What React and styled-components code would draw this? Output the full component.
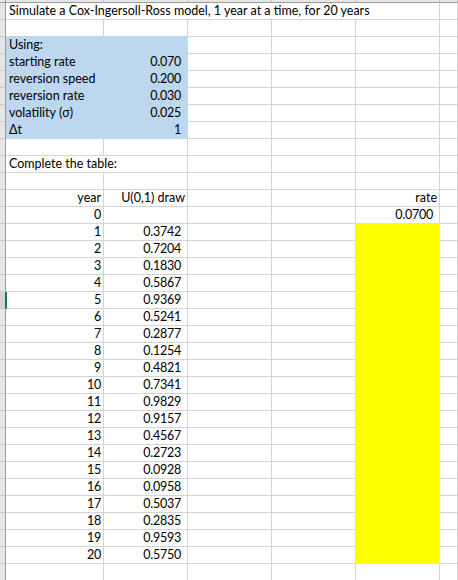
import React from "react";
import styled, { createGlobalStyle } from "styled-components";

const GlobalStyle = createGlobalStyle`
  html, body { margin: 0; padding: 0; background: #ffffff; }
  body { font-family: "Lato", "Liberation Sans", sans-serif; color: #000; overflow: hidden; }
`;

const COLS = "6px 98px 84px 84px 84px 84px 1fr";

const Sheet = styled.div`
  width: 458px;
  height: 580px;
  overflow: hidden;
  display: flex;
  flex-direction: column;
`;

const HeaderStrip = styled.div`
  display: grid;
  grid-template-columns: ${COLS};
  height: 3px;
  flex: none;
`;

const HeaderCell = styled.div`
  box-sizing: border-box;
  background: #e6e6e6;
  border-bottom: 1px solid #9b9b9b;
  border-right: 1px solid ${(p) => (p.$corner ? "#9b9b9b" : "#c6c6c6")};
`;

const Row = styled.div`
  display: grid;
  grid-template-columns: ${COLS};
  height: 17px;
  flex: none;
`;

const RowHead = styled.div`
  position: relative;
  box-sizing: border-box;
  background: ${(p) => (p.$selected ? "#d2d2d2" : "#e6e6e6")};
  border-bottom: 1px solid #c6c6c6;
  border-right: 1px solid ${(p) => (p.$selected ? "#217346" : "#9b9b9b")};
  ${(p) =>
    p.$selected &&
    `&::after {
      content: "";
      position: absolute;
      top: 0;
      bottom: -1px;
      right: -2px;
      width: 1px;
      background: #217346;
      z-index: 2;
    }`}
`;

const fills = { blue: "#bdd7ee", yellow: "#ffff00" };

const Cell = styled.div`
  box-sizing: border-box;
  grid-column: span ${(p) => p.$span || 1};
  display: flex;
  align-items: flex-end;
  justify-content: ${(p) => (p.$right ? "flex-end" : "flex-start")};
  padding: 0 ${(p) => (p.$right ? p.$pad ?? 2 : 0)}px 1px ${(p) => (p.$right ? 0 : 3)}px;
  background: ${(p) => (p.$fill ? fills[p.$fill] : "transparent")};
  border-right: 1px solid ${(p) => (p.$fill ? fills[p.$fill] : "#d4d4d4")};
  border-bottom: 1px solid ${(p) => (p.$fill ? fills[p.$fill] : "#d4d4d4")};
  box-shadow: ${(p) =>
    p.$fill
      ? `0 -1px 0 ${fills[p.$fill]}, -1px 0 0 ${fills[p.$fill]}, -1px -1px 0 ${fills[p.$fill]}`
      : "none"};
  font-size: 12.5px;
  line-height: 15px;
  letter-spacing: ${(p) => (p.$num ? "-0.25px" : "0")};
  white-space: nowrap;
  overflow: visible;
`;

const params = [
  ["Using:", ""],
  ["starting rate", "0.070"],
  ["reversion speed", "0.200"],
  ["reversion rate", "0.030"],
  ["volatility (σ)", "0.025"],
  ["Δt", "1"],
];

const draws = [
  "0.3742", "0.7204", "0.1830", "0.5867", "0.9369", "0.5241", "0.2877",
  "0.1254", "0.4821", "0.7341", "0.9829", "0.9157", "0.4567", "0.2723",
  "0.0928", "0.0958", "0.5037", "0.2835", "0.9593", "0.5750",
];

function Blank({ n = 5 }) {
  return Array.from({ length: n }).map((_, i) => <Cell key={i} />);
}

export default function App() {
  const rows = [];
  let idx = 0;
  const push = (content, selected = false) => {
    rows.push(
      <Row key={idx++}>
        <RowHead $selected={selected} />
        {content}
        <Cell />
      </Row>
    );
  };

  push(<Cell $span={5}>Simulate a Cox-Ingersoll-Ross model, 1 year at a time, for 20 years</Cell>);
  push(<Blank />);
  params.forEach(([label, val]) =>
    push(
      <>
        <Cell $fill="blue">{label}</Cell>
        <Cell $fill="blue" $right $num $pad={6}>{val}</Cell>
        <Blank n={3} />
      </>
    )
  );
  push(<Blank />);
  push(
    <>
      <Cell $span={2}>Complete the table:</Cell>
      <Blank n={3} />
    </>
  );
  push(<Blank />);
  push(
    <>
      <Cell $right>year</Cell>
      <Cell $right>U(0,1) draw</Cell>
      <Cell />
      <Cell />
      <Cell $right>rate</Cell>
    </>
  );
  push(
    <>
      <Cell $right $num>0</Cell>
      <Cell />
      <Cell />
      <Cell />
      <Cell $right $num $pad={6}>0.0700</Cell>
    </>
  );
  draws.forEach((d, i) =>
    push(
      <>
        <Cell $right $num>{i + 1}</Cell>
        <Cell $right $num $pad={6}>{d}</Cell>
        <Cell />
        <Cell />
        <Cell $fill="yellow" />
      </>,
      i + 1 === 5
    )
  );
  push(<Blank />);

  return (
    <>
      <GlobalStyle />
      <Sheet>
        <HeaderStrip>
          <HeaderCell $corner />
          <HeaderCell />
          <HeaderCell />
          <HeaderCell />
          <HeaderCell />
          <HeaderCell />
          <HeaderCell />
        </HeaderStrip>
        {rows}
      </Sheet>
    </>
  );
}
